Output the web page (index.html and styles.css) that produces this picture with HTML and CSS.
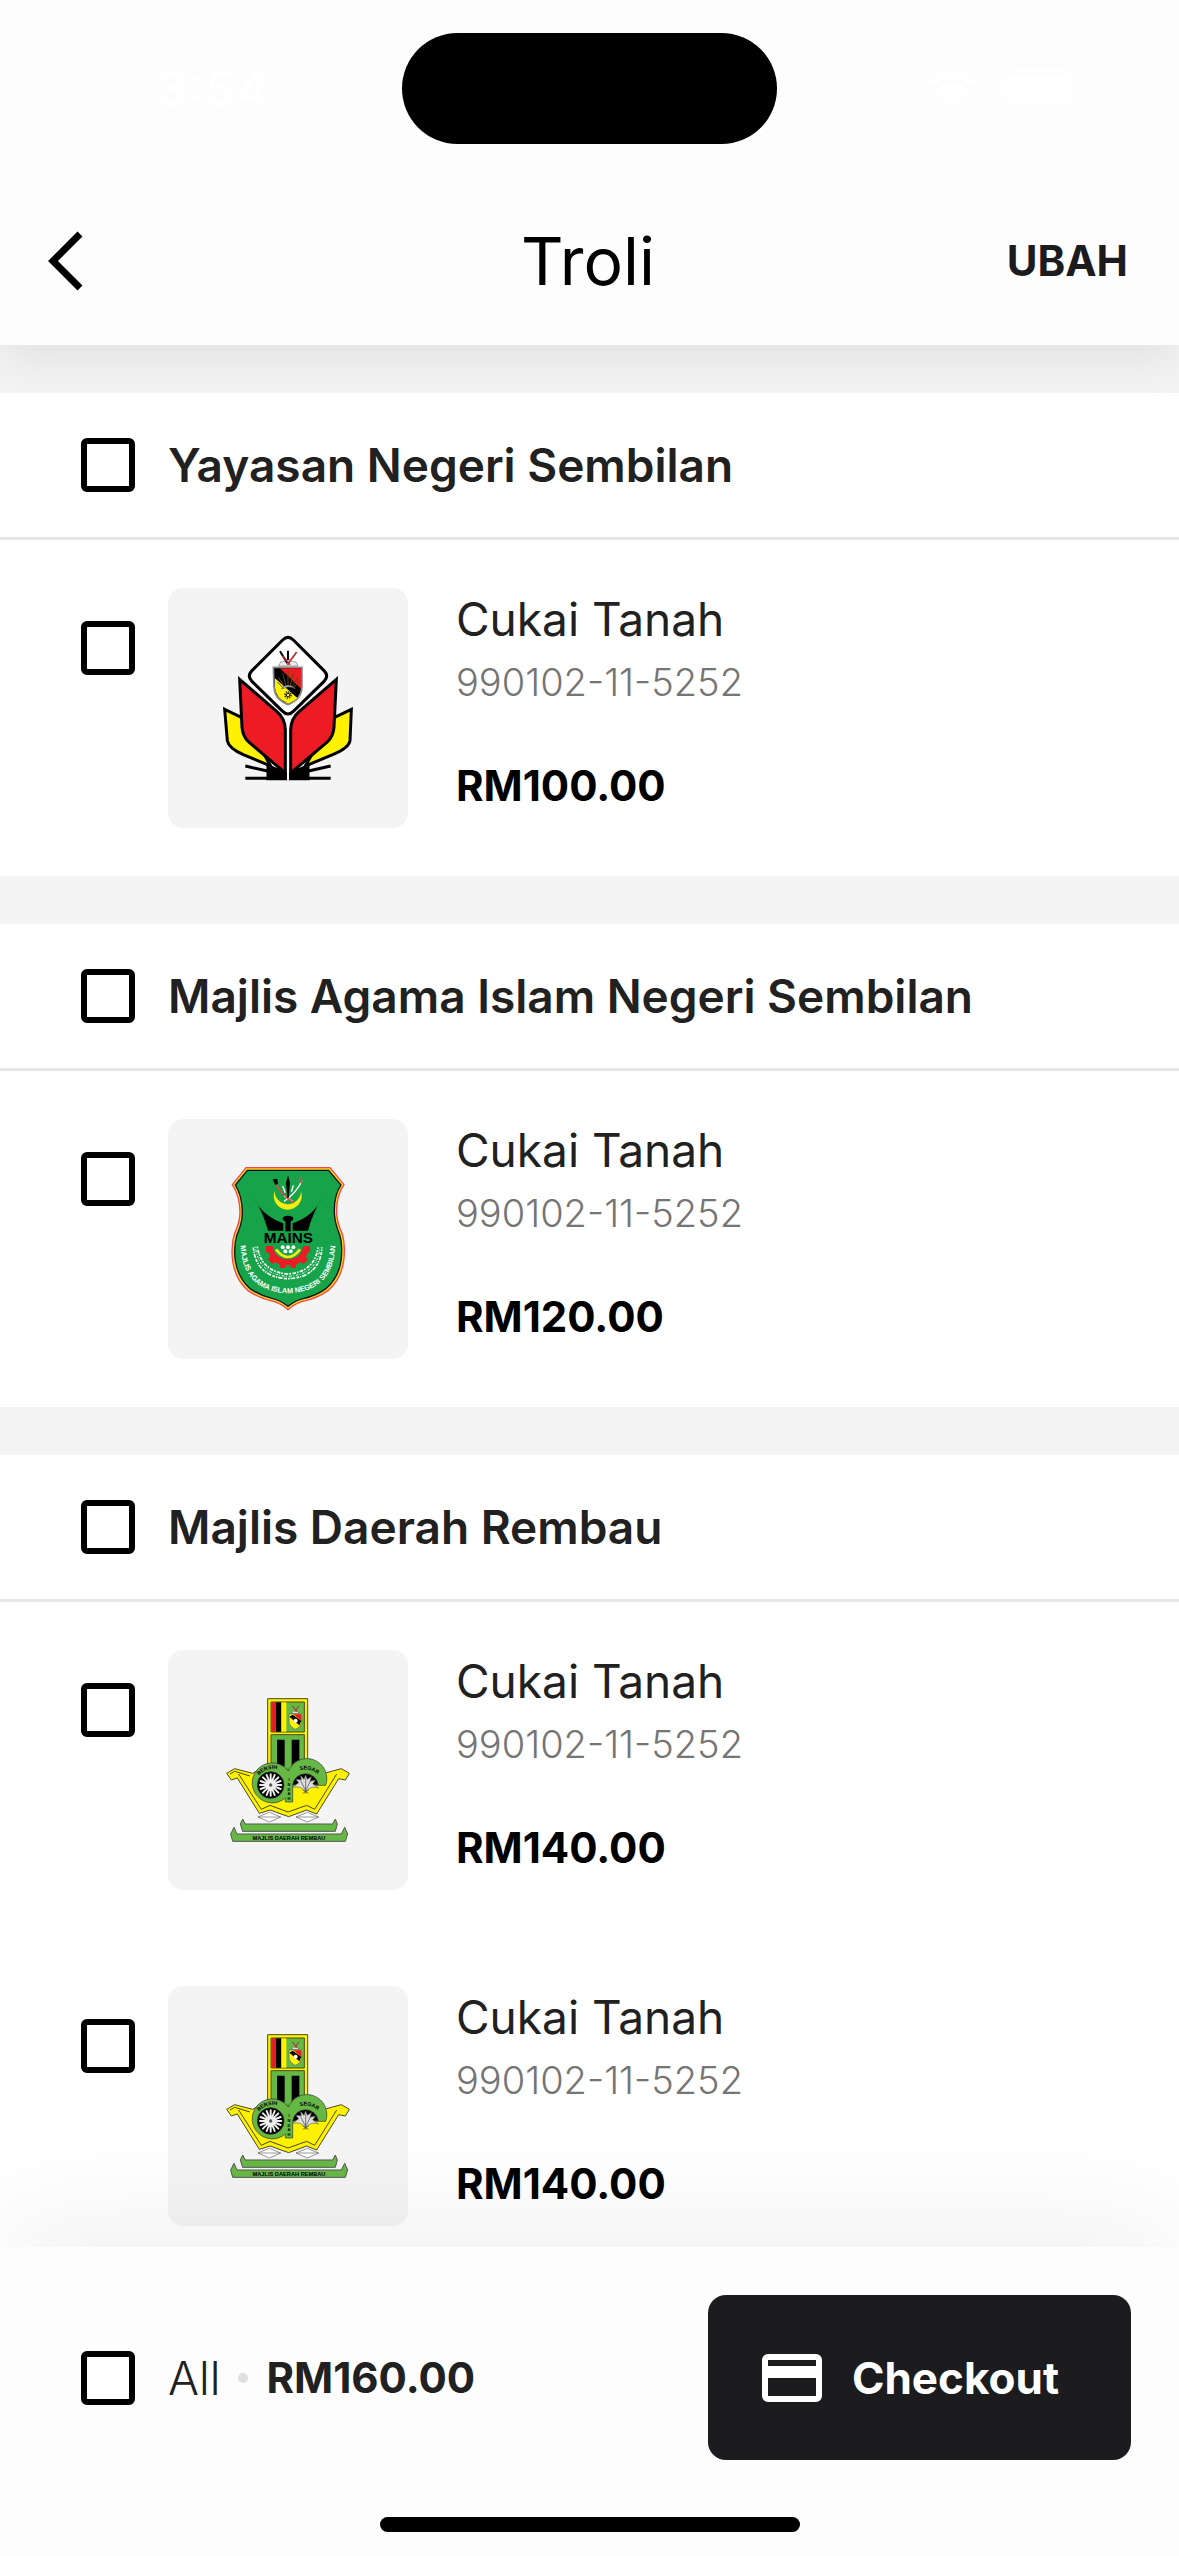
FILE: index.html
```html
<!DOCTYPE html>
<html lang="ms">
<head>
<meta charset="utf-8">
<meta name="viewport" content="width=device-width, initial-scale=1">
<title>Troli</title>
<link rel="stylesheet" href="styles.css">
</head>
<body>
<div class="app">
  <header class="top">
    <div class="status">
      <time class="clock">3:54</time>
      <span class="island"></span>
      <span class="signals">
        <svg class="wifi" viewBox="0 0 50 38" aria-hidden="true"><path fill="none" stroke="#fff" stroke-width="7" d="M3 14 Q25 -6 47 14 M11 23 Q25 10 39 23"/><path fill="#fff" d="M16 28 Q25 20 34 28 L25 37 Z"/></svg>
        <svg class="battery" viewBox="0 0 80 38" aria-hidden="true"><rect x="4" y="5" width="66" height="28" rx="9" fill="#fff"/><rect x="1" y="1" width="72" height="36" rx="12" fill="none" stroke="#fff" stroke-width="2"/></svg>
      </span>
    </div>
    <nav class="bar">
      <button class="back" type="button" aria-label="Kembali">
        <svg class="chevron" viewBox="0 0 36 60" aria-hidden="true"><path fill="none" stroke="#000" stroke-width="7" d="M32 3 L5 30 L32 57"/></svg>
      </button>
      <h1 class="title">Troli</h1>
      <button class="edit" type="button">UBAH</button>
    </nav>
  </header>

  <main class="list">
    <section class="group">
      <label class="group-head"><input class="tick" type="checkbox"><span class="group-name">Yayasan Negeri Sembilan</span></label>
      <label class="item">
        <input class="tick" type="checkbox">
        <span class="thumb">
          <svg class="logo" viewBox="-96 -66 720 720" aria-hidden="true">
            <g stroke="#000" stroke-width="9" stroke-linejoin="miter">
              <path fill="#fff200" d="M74 298 L132 326 L212 468 L130 434 Q86 414 82 392 Z"/>
              <path fill="#fff200" d="M454 298 L396 326 L316 468 L398 434 Q446 414 450 392 Z"/>
              <path fill="#000" d="M204 468 L258 490 V506 H204 Z M324 468 L270 490 V506 H324 Z"/>
              <path fill="#ed1c24" d="M119 208 L230 304 Q256 326 256 360 V489 L146 396 Q128 378 126 352 Z"/>
              <path fill="#ed1c24" d="M409 208 L298 304 Q272 326 272 360 V489 L382 396 Q400 378 402 352 Z"/>
              <path fill="#fff" d="M248 90 Q264 74 280 90 L372 182 Q388 198 372 214 L280 304 Q264 320 248 304 L156 214 Q140 198 156 182 Z"/>
              <path fill="none" d="M136 468 L206 484 M392 468 L322 484 M136 505 H258 M392 505 H270"/>
            </g>
            <path fill="#fff" d="M261 340 h6 v170 h-6z"/>
            <path fill="#000" stroke="#8c8c8c" stroke-width="5" d="M220 172 H306 V232 Q304 268 264 284 Q224 268 222 232 Z"/>
            <path fill="#ed1c24" d="M240 175 H303 V236 Z"/>
            <path fill="#fff200" d="M225 205 L292 264 Q280 276 264 281 Q226 264 225 232 Z"/>
            <path stroke="#5d4a00" stroke-width="3" fill="none" d="M264 230 V182 M258 230 L248 190 M252 230 L236 202 M270 230 L280 190 M276 230 L294 202 M250 234 L232 216 M278 234 L298 216"/>
            <path fill="#ddd" stroke="#555" stroke-width="2" d="M244 236 Q264 216 286 236 L276 232 Q264 228 254 234 Z"/>
            <circle cx="264" cy="255" r="9" fill="none" stroke="#222" stroke-width="5" stroke-dasharray="4 3"/>
            <circle cx="264" cy="255" r="5" fill="none" stroke="#222" stroke-width="3"/>
            <path fill="#eee" stroke="#777" stroke-width="2" d="M236 168 L242 156 L254 154 L264 144 L274 154 L288 156 L294 168 Z"/>
            <path fill="none" stroke="#000" stroke-width="6" d="M240 124 L262 160 M264 122 V150"/>
            <path fill="none" stroke="#c1272d" stroke-width="5" d="M290 126 L262 164 M248 138 L270 164"/>
          </svg>
        </span>
        <span class="info"><span class="name">Cukai Tanah</span><span class="account">990102-11-5252</span><strong class="price">RM100.00</strong></span>
      </label>
    </section>

    <section class="group">
      <label class="group-head"><input class="tick" type="checkbox"><span class="group-name">Majlis Agama Islam Negeri Sembilan</span></label>
      <label class="item">
        <input class="tick" type="checkbox">
        <span class="thumb">
          <svg class="logo" viewBox="-96 -63 720 720" aria-hidden="true">
            <path fill="#ffd21f" stroke="#ef4a4a" stroke-width="4" d="M138 83 H390 L432 134 Q408 168 410 220 Q412 250 426 280 Q434 304 433 332 Q434 408 384 452 Q348 476 316 482 Q284 490 264 509 Q244 490 212 482 Q180 476 144 452 Q96 410 96 332 Q96 304 104 280 Q118 250 120 220 Q120 168 97 134 Z"/>
            <path fill="#16a34a" stroke="#111" stroke-width="4" d="M142 91 H386 L423 135 Q401 168 403 220 Q405 252 419 284 Q426 306 425 332 Q426 404 379 445 Q346 468 312 475 Q284 482 264 499 Q244 482 216 475 Q182 468 149 445 Q104 404 104 332 Q104 306 111 284 Q126 252 127 220 Q127 168 106 135 Z"/>
            <path fill="#f7ec13" d="M224 152 A42 42 0 1 0 303 154 A36 36 0 1 1 224 152 Z"/>
            <path fill="none" stroke="#fff" stroke-width="4" d="M306 122 Q288 160 252 184 M248 138 L256 158 M280 136 L274 156 M252 168 L278 184"/>
            <path fill="none" stroke="#e8414d" stroke-width="5" d="M228 132 Q244 164 280 188 M303 114 L304 130"/>
            <path d="M218 118 L232 116 L234 132 L226 134 Z M264 106 L270 128 L266 174 H262 L258 128 Z"/>
            <path d="M163 174 Q184 226 250 250 V272 H204 Q192 226 163 174 Z M365 174 Q344 226 278 250 V272 H324 Q336 226 365 174 Z"/>
            <ellipse cx="264" cy="236" rx="16" ry="9"/>
            <path d="M256 236 H272 V274 H256 Z"/>
            <text class="logo-mark" x="265" y="310" text-anchor="middle">MAINS</text>
            <path fill="#ed1c24" d="M198 318 H218 Q224 356 264 358 Q304 356 310 318 H330 V336 L322 338 L318 352 L324 360 L310 372 L302 366 L288 374 V384 H272 V376 H256 V384 H240 V374 L226 366 L216 372 L204 358 L210 350 L206 338 L198 336 Z"/>
            <path fill="none" stroke="#f7ec13" stroke-width="8" d="M228 328 Q264 374 300 328"/>
            <g fill="#fff"><circle cx="248" cy="322" r="6"/><circle cx="264" cy="322" r="6"/><circle cx="280" cy="322" r="6"/><circle cx="256" cy="334" r="6"/><circle cx="272" cy="334" r="6"/></g>
            <path fill="none" stroke="#fff" stroke-width="5" stroke-dasharray="9 3 4 3 13 4" d="M160 322 Q168 412 264 416 Q360 412 366 322"/>
            <path fill="none" stroke="#fff" stroke-width="5" stroke-dasharray="5 4 11 3" d="M172 320 Q184 396 264 402 Q344 396 354 322"/>
            <path fill="none" stroke="#fff" stroke-width="3" stroke-dasharray="3 5 8 4" d="M166 320 Q176 404 264 409 Q352 404 360 322"/>
            <path id="mains-arc" fill="none" d="M122 318 Q128 454 264 460 Q400 454 406 318"/>
            <text class="logo-arc"><textPath href="#mains-arc" startOffset="50%" text-anchor="middle">MAJLIS AGAMA ISLAM NEGERI SEMBILAN</textPath></text>
          </svg>
        </span>
        <span class="info"><span class="name">Cukai Tanah</span><span class="account">990102-11-5252</span><strong class="price">RM120.00</strong></span>
      </label>
    </section>

    <section class="group">
      <label class="group-head"><input class="tick" type="checkbox"><span class="group-name">Majlis Daerah Rembau</span></label>
      <label class="item">
        <input class="tick" type="checkbox">
        <span class="thumb">
          <svg class="logo" viewBox="-96 -60 720 720" aria-hidden="true">
            <g stroke="#4a4a20" stroke-width="3">
              <path fill="#fff200" d="M203 86 H323 V284 L372 310 L424 296 L448 310 L436 330 L416 326 L350 432 L320 420 L266 440 L210 420 L178 430 L112 324 L94 330 L80 310 L104 296 L158 310 L203 284 Z"/>
              <path fill="none" d="M116 312 L184 418 L210 406 L264 426 L320 406 L344 418 L410 312 M90 312 L104 304 L150 318"/>
              <path fill="#66b845" d="M213 96 H313 V186 H213 Z M213 194 H313 V300 H213 Z"/>
            </g>
            <path fill="#ed1c24" d="M214 97 h14 v88 h-14z"/>
            <path d="M228 97 h16 v88 h-16z M231 209 h23 v80 h-23z M275 209 h23 v80 h-23z"/>
            <path fill="#fff200" d="M244 97 h15 v88 h-15z"/>
            <path fill="#fff200" stroke="#666" stroke-width="2" d="M267 132 H305 V154 Q302 172 286 178 Q268 170 267 154 Z"/>
            <path fill="#ed1c24" d="M280 133 H304 V152 Z"/>
            <path d="M268 140 L278 134 L304 152 L298 166 Z"/>
            <circle cx="287" cy="152" r="6" fill="#fff"/>
            <path fill="#eee" stroke="#666" stroke-width="2" d="M274 130 L286 118 L298 130 Z"/>
            <path stroke="#9e2a1e" stroke-width="3" d="M278 108 L290 126 M296 108 L284 126"/>
            <g stroke="#333" stroke-width="2">
              <path fill="#66b845" d="M265 303 A60 60 0 1 0 256 384 V396 H278 V346 H377 A60 60 0 0 0 265 303 Z"/>
              <circle cx="212" cy="345" r="40" fill="#000"/>
              <path fill="#000" d="M278 344 A39 39 0 0 1 355 344 Z"/>
            </g>
            <path stroke="#eee" stroke-width="6" stroke-linecap="round" d="M212 313 V377 M180 345 H244 M189 322 L235 368 M189 368 L235 322 M200 315 L224 375 M182 333 L242 357 M182 357 L242 333 M200 375 L224 315"/>
            <circle cx="212" cy="345" r="5" fill="#555"/>
            <path fill="#ddd" stroke="#666" stroke-width="2" d="M278 352 L296 338 L288 328 L304 330 L302 318 L312 328 L317 316 L322 328 L334 320 L330 334 L346 330 L338 342 L356 354 Q330 346 317 366 Q304 346 278 352 Z"/>
            <path fill="none" stroke="#444" stroke-width="2" d="M317 372 V324 M317 362 L302 332 M317 362 L332 332 M308 370 L326 360 M308 360 L326 370"/>
            <path id="rembau-a-left" fill="none" d="M176 316 Q206 288 240 300"/>
            <text class="logo-tiny"><textPath href="#rembau-a-left">BERSIH</textPath></text>
            <path id="rembau-a-right" fill="none" d="M300 301 Q336 290 366 326"/>
            <text class="logo-tiny"><textPath href="#rembau-a-right">SEGAR</textPath></text>
            <text class="logo-stack" text-anchor="middle"><tspan x="267" y="334">I</tspan><tspan x="267" y="348">N</tspan><tspan x="267" y="362">D</tspan><tspan x="267" y="376">A</tspan><tspan x="267" y="390">H</tspan></text>
            <path fill="#fff" stroke="#666" stroke-width="2" d="M174 441 L208 427 L242 441 L208 456 Z M288 441 L322 427 L356 441 L322 456 Z M174 441 H242 M288 441 H356"/>
            <path fill="#66b845" stroke="#555" stroke-width="3" d="M121 462 L128 447 L136 462 H398 L406 447 L412 462 L406 484 H128 Z M92 492 L102 472 L111 492 H424 L434 472 L443 492 L436 514 H98 Z"/>
            <text class="logo-name" x="267" y="509" text-anchor="middle">MAJLIS DAERAH REMBAU</text>
          </svg>
        </span>
        <span class="info"><span class="name">Cukai Tanah</span><span class="account">990102-11-5252</span><strong class="price">RM140.00</strong></span>
      </label>
      <label class="item">
        <input class="tick" type="checkbox">
        <span class="thumb">
          <svg class="logo" viewBox="-96 -60 720 720" aria-hidden="true">
            <g stroke="#4a4a20" stroke-width="3">
              <path fill="#fff200" d="M203 86 H323 V284 L372 310 L424 296 L448 310 L436 330 L416 326 L350 432 L320 420 L266 440 L210 420 L178 430 L112 324 L94 330 L80 310 L104 296 L158 310 L203 284 Z"/>
              <path fill="none" d="M116 312 L184 418 L210 406 L264 426 L320 406 L344 418 L410 312 M90 312 L104 304 L150 318"/>
              <path fill="#66b845" d="M213 96 H313 V186 H213 Z M213 194 H313 V300 H213 Z"/>
            </g>
            <path fill="#ed1c24" d="M214 97 h14 v88 h-14z"/>
            <path d="M228 97 h16 v88 h-16z M231 209 h23 v80 h-23z M275 209 h23 v80 h-23z"/>
            <path fill="#fff200" d="M244 97 h15 v88 h-15z"/>
            <path fill="#fff200" stroke="#666" stroke-width="2" d="M267 132 H305 V154 Q302 172 286 178 Q268 170 267 154 Z"/>
            <path fill="#ed1c24" d="M280 133 H304 V152 Z"/>
            <path d="M268 140 L278 134 L304 152 L298 166 Z"/>
            <circle cx="287" cy="152" r="6" fill="#fff"/>
            <path fill="#eee" stroke="#666" stroke-width="2" d="M274 130 L286 118 L298 130 Z"/>
            <path stroke="#9e2a1e" stroke-width="3" d="M278 108 L290 126 M296 108 L284 126"/>
            <g stroke="#333" stroke-width="2">
              <path fill="#66b845" d="M265 303 A60 60 0 1 0 256 384 V396 H278 V346 H377 A60 60 0 0 0 265 303 Z"/>
              <circle cx="212" cy="345" r="40" fill="#000"/>
              <path fill="#000" d="M278 344 A39 39 0 0 1 355 344 Z"/>
            </g>
            <path stroke="#eee" stroke-width="6" stroke-linecap="round" d="M212 313 V377 M180 345 H244 M189 322 L235 368 M189 368 L235 322 M200 315 L224 375 M182 333 L242 357 M182 357 L242 333 M200 375 L224 315"/>
            <circle cx="212" cy="345" r="5" fill="#555"/>
            <path fill="#ddd" stroke="#666" stroke-width="2" d="M278 352 L296 338 L288 328 L304 330 L302 318 L312 328 L317 316 L322 328 L334 320 L330 334 L346 330 L338 342 L356 354 Q330 346 317 366 Q304 346 278 352 Z"/>
            <path fill="none" stroke="#444" stroke-width="2" d="M317 372 V324 M317 362 L302 332 M317 362 L332 332 M308 370 L326 360 M308 360 L326 370"/>
            <path id="rembau-b-left" fill="none" d="M176 316 Q206 288 240 300"/>
            <text class="logo-tiny"><textPath href="#rembau-b-left">BERSIH</textPath></text>
            <path id="rembau-b-right" fill="none" d="M300 301 Q336 290 366 326"/>
            <text class="logo-tiny"><textPath href="#rembau-b-right">SEGAR</textPath></text>
            <text class="logo-stack" text-anchor="middle"><tspan x="267" y="334">I</tspan><tspan x="267" y="348">N</tspan><tspan x="267" y="362">D</tspan><tspan x="267" y="376">A</tspan><tspan x="267" y="390">H</tspan></text>
            <path fill="#fff" stroke="#666" stroke-width="2" d="M174 441 L208 427 L242 441 L208 456 Z M288 441 L322 427 L356 441 L322 456 Z M174 441 H242 M288 441 H356"/>
            <path fill="#66b845" stroke="#555" stroke-width="3" d="M121 462 L128 447 L136 462 H398 L406 447 L412 462 L406 484 H128 Z M92 492 L102 472 L111 492 H424 L434 472 L443 492 L436 514 H98 Z"/>
            <text class="logo-name" x="267" y="509" text-anchor="middle">MAJLIS DAERAH REMBAU</text>
          </svg>
        </span>
        <span class="info"><span class="name">Cukai Tanah</span><span class="account">990102-11-5252</span><strong class="price">RM140.00</strong></span>
      </label>
    </section>
  </main>

  <footer class="bottom">
    <div class="summary">
      <label class="all"><input class="tick" type="checkbox"><span class="all-name">All</span></label>
      <span class="dot"></span>
      <strong class="total">RM160.00</strong>
      <button class="checkout" type="button">
        <svg class="card" viewBox="0 0 60 48" aria-hidden="true"><rect x="3" y="3" width="54" height="42" rx="3" fill="none" stroke="#fff" stroke-width="6"/><path fill="#fff" d="M3 12 h54 v12 h-54z"/></svg>
        Checkout
      </button>
    </div>
    <div class="home"></div>
  </footer>
</div>
</body>
</html>
```
FILE: styles.css
```css
* {
  box-sizing: border-box;
}

body {
  margin: 0;
  background: #f4f4f4;
  color: #212121;
  font-family: Inter, "Open Sans", sans-serif;
  font-size: 42px;
  line-height: 64px;
}

button {
  border: 0;
  padding: 0;
  background: none;
  color: #1c1c1e;
  font: inherit;
  font-weight: 700;
}

.app {
  display: flex;
  flex-direction: column;
  height: 100vh;
}

/* Header */
.top {
  position: relative;
  z-index: 1;
  background: #fdfdfd;
  box-shadow: 0 18px 42px rgba(0, 0, 0, 0.07);
}

.status {
  display: grid;
  grid-template-columns: 1fr auto 1fr;
  align-items: center;
  height: 177px;
}

.clock {
  padding-left: 24px;
  color: #fff;
  font-size: 50px;
  font-weight: 600;
  text-align: center;
}

.island {
  width: 375px;
  height: 111px;
  border-radius: 56px;
  background: #000;
}

.signals {
  display: flex;
  justify-content: center;
  gap: 24px;
  padding-left: 52px;
}

.wifi {
  width: 50px;
  height: 38px;
}

.battery {
  width: 80px;
  height: 38px;
}

.bar {
  display: grid;
  grid-template-columns: 1fr auto 1fr;
  align-items: center;
  height: 168px;
  padding: 0 51px 0 48px;
}

.back {
  display: flex;
  justify-self: start;
}

.chevron {
  width: 36px;
  height: 60px;
}

.title {
  margin: 0;
  color: #000;
  font-size: 66px;
  font-weight: 400;
}

.edit {
  justify-self: end;
}

/* Cart list */
.list {
  display: flex;
  flex: 1;
  flex-direction: column;
  gap: 48px;
  min-height: 0;
  padding-top: 48px;
  overflow-y: auto;
  scrollbar-width: none;
}

.group {
  flex: none;
  background: #fff;
}

.group-head {
  display: flex;
  align-items: center;
  gap: 33px;
  height: 147px;
  padding: 0 48px 0 81px;
  border-bottom: 3px solid #e6e6e6;
}

.group-name {
  font-size: 46px;
  font-weight: 600;
}

.tick {
  flex: none;
  width: 54px;
  height: 54px;
  margin: 0;
  border: 6px solid #000;
  border-radius: 6px;
  background: #fff;
  appearance: none;
}

.tick:checked {
  background: #000;
}

.item {
  display: flex;
  gap: 33px;
  padding: 48px 48px 48px 81px;
}

.item .tick {
  margin-top: 33px;
}

.thumb {
  flex: none;
  width: 240px;
  height: 240px;
  border-radius: 15px;
  background: #f4f4f4;
}

.logo {
  display: block;
  width: 100%;
  height: 100%;
}

.logo-mark {
  font: 700 46px "Liberation Sans Narrow", "Liberation Sans", sans-serif;
}

.logo-arc {
  fill: #fff;
  font: 700 22px "Liberation Sans", sans-serif;
}

.logo-tiny {
  font: 700 16px "Liberation Sans", sans-serif;
}

.logo-stack {
  font: 700 12px "Liberation Sans", sans-serif;
}

.logo-name {
  font: 700 17px "Liberation Sans", sans-serif;
}

.info {
  display: flex;
  flex-direction: column;
  padding-left: 15px;
}

.name {
  font-size: 46px;
  line-height: 62px;
}

.account {
  color: #757575;
  font-size: 38px;
  font-weight: 300;
}

.price {
  margin-top: 40px;
  color: #000;
}

/* Footer */
.bottom {
  position: relative;
  z-index: 1;
  display: flex;
  flex-direction: column;
  gap: 57px;
  padding: 48px 48px 24px 81px;
  background: #fdfdfd;
  box-shadow: 0 -24px 120px rgba(0, 0, 0, 0.06);
}

.summary {
  display: flex;
  align-items: center;
}

.all {
  display: flex;
  align-items: center;
  gap: 33px;
}

.all-name {
  font-size: 46px;
  font-weight: 300;
}

.dot {
  width: 10px;
  height: 10px;
  margin: 0 18px;
  border-radius: 50%;
  background: #e0e0e0;
}

.checkout {
  display: flex;
  align-items: center;
  gap: 30px;
  height: 165px;
  margin-left: auto;
  padding: 0 72px 0 54px;
  border-radius: 18px;
  background: #1c1c1e;
  color: #fff;
  font-size: 44px;
}

.card {
  width: 60px;
  height: 48px;
}

.home {
  align-self: center;
  width: 420px;
  height: 15px;
  margin-right: 33px;
  border-radius: 8px;
  background: #000;
}
```
